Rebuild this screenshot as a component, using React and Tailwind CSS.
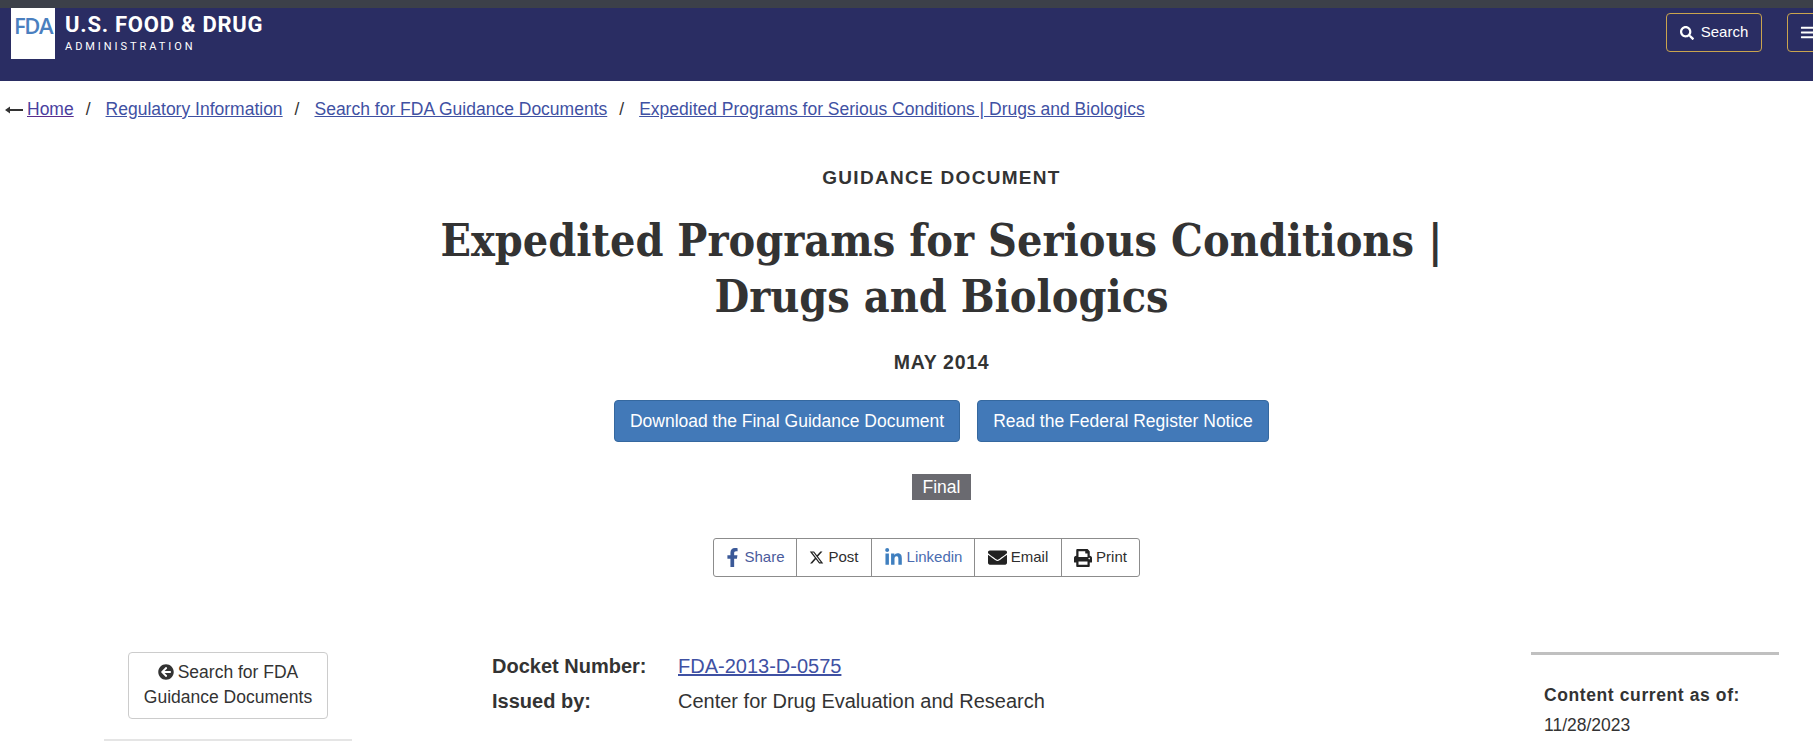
import React from "react";
import {
  FaSearch,
  FaBars,
  FaFacebookF,
  FaLinkedinIn,
  FaEnvelope,
  FaPrint,
  FaArrowCircleLeft,
} from "react-icons/fa";
import { FaXTwitter } from "react-icons/fa6";

const crumbs = [
  "Regulatory Information",
  "Search for FDA Guidance Documents",
  "Expedited Programs for Serious Conditions | Drugs and Biologics",
];

const shares = [
  { label: "Share", Icon: FaFacebookF, color: "text-[#4a5a9c]", icon: "text-[#3b5998] text-[19px]", w: "w-[82px] gap-[2px] pr-[2px]" },
  { label: "Post", Icon: FaXTwitter, color: "text-[#2e2e2e]", icon: "text-[#222] text-[15px]", w: "w-[75px] gap-[4px]" },
  { label: "Linkedin", Icon: FaLinkedinIn, color: "text-[#4a6cb0]", icon: "text-[#3f7fbf] text-[19px]", w: "w-[103px] gap-[4px]" },
  { label: "Email", Icon: FaEnvelope, color: "text-[#2e2e2e]", icon: "text-[#222] text-[19px]", w: "w-[87px] gap-[4px]" },
  { label: "Print", Icon: FaPrint, color: "text-[#2e2e2e]", icon: "text-[#222] text-[18px]", w: "w-[78px] gap-[4px]" },
];

const Header = () => (
  <header className="h-[81px] bg-[#2a2d63] border-t-[8px] border-[#3c4049] flex items-start">
    <div className="ml-[11px] w-[44px] h-[51px] bg-white flex justify-center pt-[6px]">
      <span className="text-[#4a7fbf] text-[22px] leading-[22px] tracking-[-1.5px] font-semibold font-['Open_Sans',sans-serif]">FDA</span>
    </div>
    <div className="ml-[10px] font-['Roboto',sans-serif] text-white">
      <div className="text-[22px] leading-[24px] font-bold tracking-[0.75px] mt-[5px]">U.S. FOOD &amp; DRUG</div>
      <div className="text-[11px] leading-[14px] font-normal tracking-[2.95px] mt-[3px]">ADMINISTRATION</div>
    </div>
    <div className="ml-auto flex gap-[25px] mt-[5px] -mr-[25px] font-['Liberation_Sans',sans-serif]">
      <button className="w-[96px] h-[39px] border border-[#c9a44e] rounded-[4px] flex items-center justify-center gap-[7px] text-white text-[15px]">
        <FaSearch className="text-[14px]" />
        Search
      </button>
      <button className="w-[51px] h-[39px] border border-[#c9a44e] rounded-[4px] flex items-center pl-[12px] text-white">
        <FaBars className="text-[15px]" />
      </button>
    </div>
  </header>
);

const Breadcrumbs = () => (
  <nav className="h-[54px] flex items-center pl-[5px] pt-[2px] text-[17.5px] text-[#333]">
    <svg width="18" height="8" viewBox="0 0 18 8" className="mr-[4px] mt-[1px]">
      <path d="M0 4 L5 0.5 V3 H18 V5 H5 V7.5 Z" fill="#333" />
    </svg>
    <a href="#" className="underline text-[#4a3f9f] decoration-[#5b2d8e]">Home</a>
    {crumbs.map((c) => (
      <React.Fragment key={c}>
        <span className="mx-[12px]">/</span>
        <a href="#" className="underline text-[#3f51a3] pl-[3px]">{c}</a>
      </React.Fragment>
    ))}
  </nav>
);

const Hero = () => (
  <section className="flex flex-col items-center text-[#333] pl-[70px]">
    <div className="mt-[30px] text-[19px] leading-[26px] font-bold tracking-[1.3px]">GUIDANCE DOCUMENT</div>
    <h1 className="mt-[21px] text-center text-[44.5px] leading-[56px] font-bold font-['DejaVu_Serif_Condensed','DejaVu_Serif',serif]">
      Expedited Programs for Serious Conditions |<br />Drugs and Biologics
    </h1>
    <div className="mt-[25px] text-[19.5px] leading-[26px] font-bold tracking-[0.7px]">MAY 2014</div>
    <div className="mt-[25px] flex gap-[17px]">
      <a className="h-[42px] w-[346px] flex items-center justify-center bg-[#4279b8] border border-[#35689f] rounded-[4px] text-white text-[17.5px]">Download the Final Guidance Document</a>
      <a className="h-[42px] w-[292px] flex items-center justify-center bg-[#4279b8] border border-[#35689f] rounded-[4px] text-white text-[17.5px]">Read the Federal Register Notice</a>
    </div>
    <span className="mt-[32px] w-[59px] h-[26px] flex items-center justify-center bg-[#6a6a70] text-white text-[17.5px]">Final</span>
    <div className="mt-[38px] mr-[30px] h-[39px] flex border border-[#8c8c8c] rounded-[3px] text-[15px]">
      {shares.map(({ label, Icon, color, icon, w }, i) => (
        <div key={label} className={`${w} flex items-center justify-center ${i > 0 ? "border-l border-[#8c8c8c]" : ""} ${color}`}>
          <Icon className={icon} />
          {label}
        </div>
      ))}
    </div>
  </section>
);

const Details = () => (
  <section className="mt-[75px] flex items-start text-[#333]">
    <aside className="ml-[104px] w-[248px]">
      <a className="mx-auto w-[200px] h-[67px] block border border-[#ccc] rounded-[4px] text-center text-[17.5px] leading-[25px] pt-[7px]">
        <FaArrowCircleLeft className="inline text-[16px] mr-[4px] -mt-[3px]" />
        Search for FDA<br />Guidance Documents
      </a>
      <div className="mt-[20px] h-[2px] bg-[#e5e5e5]" />
    </aside>
    <div className="ml-[140px] -mt-[3px] w-[1039px] text-[20px] leading-[35px]">
      <div className="flex">
        <b className="w-[186px]">Docket Number:</b>
        <a className="underline text-[#3f51a3]">FDA-2013-D-0575</a>
      </div>
      <div className="flex">
        <b className="w-[186px]">Issued by:</b>
        <span>Center for Drug Evaluation and Research</span>
      </div>
    </div>
    <aside className="w-[248px] border-t-[3px] border-[#c0c0c0] pl-[13px]">
      <div className="mt-[28px] text-[17.5px] leading-[24px] font-bold tracking-[0.6px]">Content current as of:</div>
      <div className="mt-[6px] text-[17.5px] leading-[24px]">11/28/2023</div>
    </aside>
  </section>
);

export default function App() {
  return (
    <div className="w-[1813px] h-[742px] overflow-hidden bg-white font-['Liberation_Sans',Arial,sans-serif]">
      <Header />
      <Breadcrumbs />
      <Hero />
      <Details />
    </div>
  );
}
